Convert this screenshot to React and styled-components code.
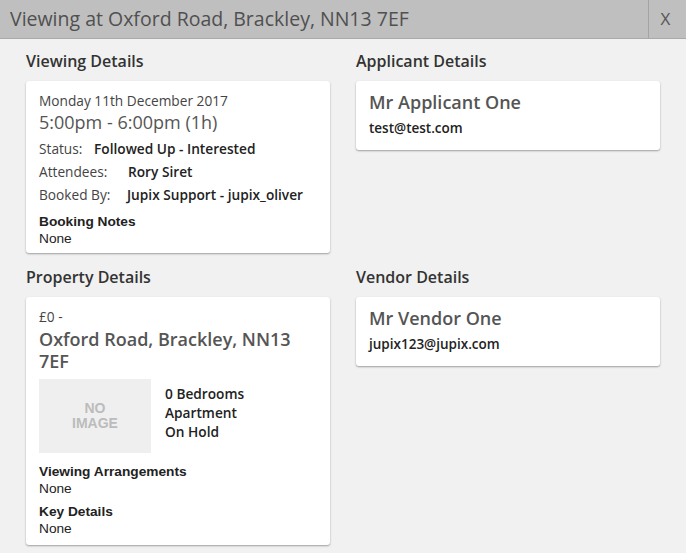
import React from "react";
import styled, { createGlobalStyle } from "styled-components";

const Global = createGlobalStyle`
  html, body { margin: 0; padding: 0; background: #f1f1f1; }
  body { font-family: "Open Sans", "Liberation Sans", sans-serif; color: #444; }
  * { box-sizing: border-box; }
`;

const Page = styled.div`
  width: 686px;
  min-height: 553px;
  background: #f1f1f1;
`;

const Header = styled.div`
  display: flex;
  align-items: stretch;
  height: 39px;
  background: #bfbfbf;
  border-bottom: 1px solid #a9a9a9;
`;

const Title = styled.div`
  flex: 1;
  padding-left: 10px;
  font-size: 19.5px;
  line-height: 38px;
  color: #505050;
  white-space: nowrap;
`;

const Close = styled.div`
  width: 38px;
  border-left: 1px solid #a4a4a4;
  font-size: 17px;
  line-height: 38px;
  text-align: center;
  color: #555;
  padding-right: 4px;
`;

const Body = styled.div`
  display: grid;
  grid-template-columns: 304px 304px;
  column-gap: 26px;
  padding: 12px 26px 0;
  align-items: start;
`;

const Section = styled.section`
  margin-bottom: ${(p) => p.$mb || 0}px;
`;

const Heading = styled.h2`
  margin: 0 0 10px;
  font-size: 16px;
  line-height: 20px;
  font-weight: 600;
  color: #333;
`;

const Card = styled.div`
  background: #fff;
  border-radius: 3px;
  box-shadow: 0 1px 2px rgba(0, 0, 0, 0.35);
  padding: 10px 13px ${(p) => p.$pb || 10}px;
`;

const Small = styled.div`
  font-size: 13.7px;
  line-height: 19px;
  color: #444;
`;

const Big = styled.div`
  font-size: 18px;
  line-height: 22px;
  color: #555;
  font-weight: ${(p) => (p.$semi ? 600 : 400)};
  margin-top: ${(p) => p.$mt || 0}px;
`;

const Rows = styled.div`
  margin-top: 4px;
`;

const Row = styled.div`
  display: flex;
  font-size: 13.7px;
  line-height: 23px;
`;

const Label = styled.span`
  width: ${(p) => p.$w}px;
  flex: none;
  color: #444;
`;

const Value = styled.span`
  font-weight: 600;
  color: #222;
`;

const Email = styled.div`
  margin-top: 3px;
  font-size: 13.5px;
  line-height: 24px;
  font-weight: 600;
  color: #222;
`;

const Note = styled.div`
  font-family: "Liberation Sans", Arial, sans-serif;
  font-size: 13.7px;
  line-height: 17px;
  color: #222;
  margin-top: ${(p) => p.$mt || 0}px;
`;

const NoteTitle = styled.div`
  font-weight: 700;
`;

const PropTitle = styled.div`
  margin-top: 2px;
  font-size: 18px;
  line-height: 22px;
  font-weight: 600;
  color: #555;
  padding-right: 20px;
`;

const Media = styled.div`
  display: flex;
  gap: 14px;
  margin-top: 7px;
`;

const NoImage = styled.div`
  width: 112px;
  height: 74px;
  flex: none;
  background: #efefef;
  display: flex;
  align-items: center;
  justify-content: center;
  text-align: center;
  font-family: "Liberation Sans", Arial, sans-serif;
  font-weight: 700;
  font-size: 14px;
  line-height: 15px;
  color: #bcbcbc;
`;

const Facts = styled.div`
  padding-top: 5px;
  font-size: 13.7px;
  line-height: 19px;
  font-weight: 600;
  color: #222;
`;

export default function App() {
  return (
    <Page>
      <Global />
      <Header>
        <Title>Viewing at Oxford Road, Brackley, NN13 7EF</Title>
        <Close>X</Close>
      </Header>
      <Body>
        <Section $mb={14}>
          <Heading>Viewing Details</Heading>
          <Card $pb={6}>
            <Small>Monday 11th December 2017</Small>
            <Big $mt={1}>5:00pm - 6:00pm (1h)</Big>
            <Rows>
              <Row>
                <Label $w={55}>Status:</Label>
                <Value>Followed Up - Interested</Value>
              </Row>
              <Row>
                <Label $w={89}>Attendees:</Label>
                <Value>Rory Siret</Value>
              </Row>
              <Row>
                <Label $w={88}>Booked By:</Label>
                <Value>Jupix Support - jupix_oliver</Value>
              </Row>
            </Rows>
            <Note $mt={7}>
              <NoteTitle>Booking Notes</NoteTitle>
              None
            </Note>
          </Card>
        </Section>
        <Section>
          <Heading>Applicant Details</Heading>
          <Card>
            <Big $semi>Mr Applicant One</Big>
            <Email>test@test.com</Email>
          </Card>
        </Section>
        <Section>
          <Heading>Property Details</Heading>
          <Card $pb={8}>
            <Small>£0 -</Small>
            <PropTitle>Oxford Road, Brackley, NN13 7EF</PropTitle>
            <Media>
              <NoImage>
                NO
                <br />
                IMAGE
              </NoImage>
              <Facts>
                <div>0 Bedrooms</div>
                <div>Apartment</div>
                <div>On Hold</div>
              </Facts>
            </Media>
            <Note $mt={10}>
              <NoteTitle>Viewing Arrangements</NoteTitle>
              None
            </Note>
            <Note $mt={6}>
              <NoteTitle>Key Details</NoteTitle>
              None
            </Note>
          </Card>
        </Section>
        <Section>
          <Heading>Vendor Details</Heading>
          <Card>
            <Big $semi>Mr Vendor One</Big>
            <Email>jupix123@jupix.com</Email>
          </Card>
        </Section>
      </Body>
    </Page>
  );
}
